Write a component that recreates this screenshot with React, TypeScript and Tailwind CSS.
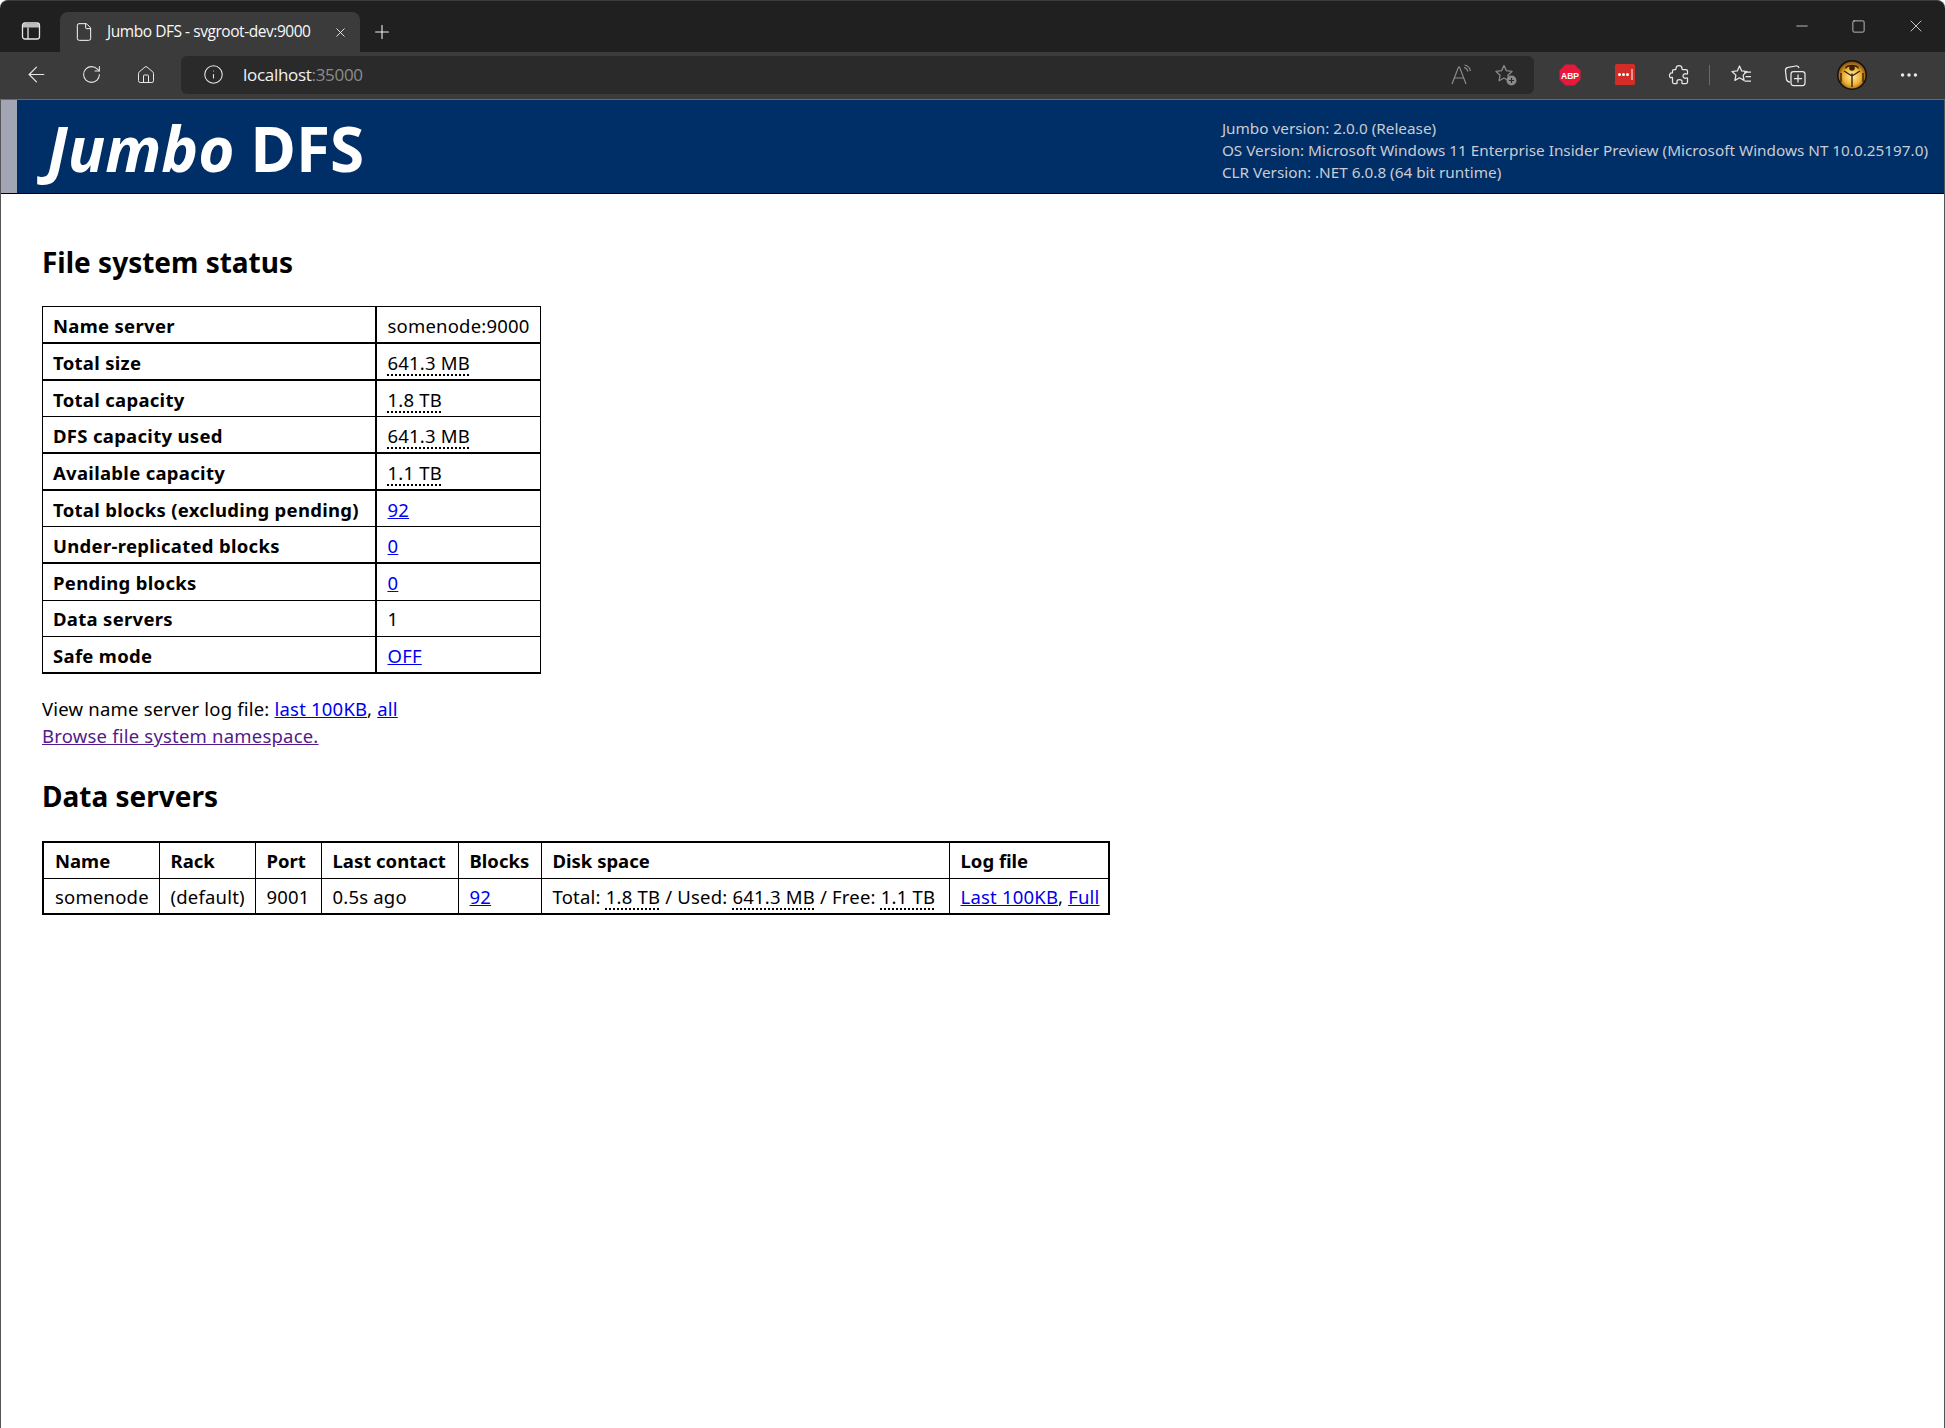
import React from "react";
import { ArrowLeft, RotateCw, House, Info, X, Plus, File, Minus, Square, Ellipsis } from "lucide-react";

const Size = ({ children }: { children: React.ReactNode }) => (
  <abbr title="bytes" className="underline decoration-dotted decoration-2 underline-offset-[5px]">
    {children}
  </abbr>
);

const Link = ({ children, visited }: { children: React.ReactNode; visited?: boolean }) => (
  <a href="#" className={visited ? "text-[#551a8b] underline" : "text-[#0000ee] underline"}>
    {children}
  </a>
);

const statusRows: { label: string; value: React.ReactNode; thin?: boolean }[] = [
  { label: "Name server", value: "somenode:9000" },
  { label: "Total size", value: <Size>641.3 MB</Size> },
  { label: "Total capacity", value: <Size>1.8 TB</Size>, thin: true },
  { label: "DFS capacity used", value: <Size>641.3 MB</Size> },
  { label: "Available capacity", value: <Size>1.1 TB</Size> },
  { label: "Total blocks (excluding pending)", value: <Link>92</Link>, thin: true },
  { label: "Under-replicated blocks", value: <Link>0</Link> },
  { label: "Pending blocks", value: <Link>0</Link>, thin: true },
  { label: "Data servers", value: "1", thin: true },
  { label: "Safe mode", value: <Link>OFF</Link> },
];

function SidebarIcon() {
  return (
    <svg width="20" height="20" viewBox="0 0 20 20" fill="none" stroke="#e8e8e8" strokeWidth="1.300" className="mb-[11px]">
      <rect x="1.500" y="2" width="17" height="16" rx="2.500" />
      <path d="M2 3h16v3.500H2z" fill="#bdbdbd" stroke="none" />
      <path d="M7 6.500V18" />
    </svg>
  );
}

function StarPlus() {
  return (
    <svg width="24" height="24" viewBox="0 0 24 24" fill="none" stroke="#8a8a8a" strokeWidth="1.300">
      <path d="M10 2.500l2.400 5.200 5.600.7-4.100 3.800 1 5.500-4.900-2.700-4.900 2.700 1-5.500L2 8.400l5.600-.7z" strokeLinejoin="round" />
      <circle cx="17.500" cy="17.500" r="5" fill="#8a8a8a" stroke="none" />
      <path d="M17.500 15v5M15 17.500h5" stroke="#2a2a2a" strokeWidth="1.200" />
    </svg>
  );
}

function ReadAloud() {
  return (
    <svg width="24" height="24" viewBox="0 0 24 24" fill="none" stroke="#8a8a8a" strokeWidth="1.200">
      <path d="M3 21L9.500 4h1L17 21M5.500 15h9.500" />
      <path d="M15 4.500c2 .5 3.500 2 4 4M15.500 2c3 .6 5.400 3 6 6" />
    </svg>
  );
}

function Abp() {
  return (
    <svg width="22" height="22" viewBox="0 0 22 22">
      <path d="M6.500 0.500h9l6 6v9l-6 6h-9l-6-6v-9z" fill="#e8173c" />
      <text x="11" y="14.500" textAnchor="middle" fontSize="8.500" fontWeight="700" fill="#fff" fontFamily="'Liberation Sans', sans-serif">
        ABP
      </text>
    </svg>
  );
}

function PasswordExt() {
  return (
    <svg width="20" height="21" viewBox="0 0 20 21">
      <rect width="20" height="21" rx="1.500" fill="#d22d27" />
      <circle cx="4.500" cy="10.500" r="1.500" fill="#fff" />
      <circle cx="8.500" cy="10.500" r="1.500" fill="#fff" />
      <circle cx="12.500" cy="10.500" r="1.500" fill="#fff" />
      <path d="M17 5v11" stroke="#fff" strokeWidth="1" />
    </svg>
  );
}

function PuzzleBlob() {
  return (
    <svg width="22" height="22" viewBox="0 0 22 22" fill="none" stroke="#e8e8e8" strokeWidth="1.250" strokeLinejoin="round">
      <path d="M8 4.500C8 2.700 9.500 1.500 11 1.500s3 1.200 3 3c0 .5 0 1 .5 1H18c1 0 1.500.6 1.500 1.500v2.500c0 .7-.7.7-1.200.5-2-.8-3.300.5-3.300 2s1.300 2.800 3.300 2c.5-.2 1.200-.2 1.200.5V18c0 1-.6 1.500-1.500 1.500h-3.500c-.7 0-.7-.6-.5-1.200.6-1.800-.8-2.800-2.500-2.800s-3 1-2.500 2.800c.2.600.2 1.200-.5 1.200H6c-1 0-1.500-.6-1.500-1.500v-4c0-.6-.5-.7-1-.6C2.500 14.500 1.500 13 1.500 11.500S2.500 8.800 3.500 9c.5.100 1 0 1-.6V7c0-1 .6-1.500 1.500-1.500h1.500c.4 0 .5-.5.500-1z" />
    </svg>
  );
}

function Favorites() {
  return (
    <svg width="22" height="22" viewBox="0 0 22 22" fill="none" stroke="#e8e8e8" strokeWidth="1.250">
      <path d="M9.500 2l2.200 4.900 5.300.6-3.900 3.600 1 5.300-4.600-2.600-4.600 2.600 1-5.300L2 7.500l5.300-.6z" strokeLinejoin="round" />
      <path d="M14 8h7M15.500 12.500h5.500M14.500 17h6.500" />
    </svg>
  );
}

function Collections() {
  return (
    <svg width="22" height="24" viewBox="0 0 22 24" fill="none" stroke="#e8e8e8" strokeWidth="1.250">
      <path d="M6 19c-2 0-3-1-3.500-2.500L1.500 8C1.300 6 2.500 4.500 4 4.300L12 3c1.500-.2 2.700.8 3 2" />
      <rect x="7" y="8.500" width="14" height="14" rx="2.500" />
      <path d="M14 11.500v8M10 15.500h8" />
    </svg>
  );
}

function Avatar() {
  return (
    <svg width="30" height="30" viewBox="0 0 30 30">
      <defs>
        <radialGradient id="glow" cx="50%" cy="55%" r="55%">
          <stop offset="0%" stopColor="#fff0b0" />
          <stop offset="60%" stopColor="#f0b030" />
          <stop offset="100%" stopColor="#7a4a10" />
        </radialGradient>
      </defs>
      <circle cx="15" cy="15" r="15" fill="#17100a" />
      <circle cx="15" cy="15" r="13.500" fill="url(#glow)" />
      <path d="M15 13.500V27M7 11l8 5 8-5M8.500 8.500C10 4.500 20 4.500 21.500 8.500M4 13v9M26 13v9" stroke="#3a2208" strokeWidth="1.400" fill="none" />
      <circle cx="15" cy="8" r="2.800" fill="#3a2208" />
    </svg>
  );
}

export default function App() {
  return (
    <div className="w-[1945px] h-[1428px] flex flex-col bg-white overflow-hidden font-['Noto_Sans',sans-serif] text-black text-[18.5px] tracking-[0.2px]">
      {/* title bar */}
      <div className="h-[52px] bg-[#202020] border-t border-[#3c3c3c] rounded-t-lg flex items-end shrink-0 pl-[21px] tracking-normal">
        <SidebarIcon />
        <div className="w-[300px] h-10 ml-[19px] bg-[#3b3b3b] rounded-t-lg flex items-center pl-[14px] pr-[12px] text-[#f8f8f8] text-[15.500px] font-['Open_Sans',sans-serif] tracking-[-0.450px]">
          <File size={20} strokeWidth={1.200} className="mr-[13px]" />
          <span className="flex-1">Jumbo DFS - svgroot-dev:9000</span>
          <X size={15} strokeWidth={1.400} />
        </div>
        <Plus size={22} strokeWidth={1.200} className="text-[#f0f0f0] ml-[11px] mb-[9px]" />
        <div className="ml-auto flex items-center gap-[40px] pr-[19px] mb-[16px] text-[#e8e8e8]">
          <Minus size={18} strokeWidth={1} />
          <Square size={15} strokeWidth={1.200} />
          <X size={20} strokeWidth={1} />
        </div>
      </div>

      {/* toolbar */}
      <div className="h-[48px] bg-[#3b3b3b] border-b border-[#6a6a6a] flex items-center shrink-0 pl-[24px] pr-[15px] pb-[2px] text-[#e8e8e8] tracking-normal">
        <ArrowLeft size={25} strokeWidth={1.100} />
        <RotateCw size={21} strokeWidth={1.200} className="ml-[32px]" />
        <House size={20} strokeWidth={1.200} className="ml-[34px]" />
        <div className="ml-[25px] w-[1353px] h-[38px] bg-[#2a2a2a] rounded-md flex items-center pl-[22px] pr-[16px]">
          <Info size={21} strokeWidth={1.200} className="mr-[19px]" />
          <span className="text-[#f2f2f2] text-[17px] font-['Open_Sans',sans-serif] tracking-[-0.3px]">
            localhost<span className="text-[#8c8c8c]">:35000</span>
          </span>
          <span className="ml-auto flex items-center gap-[21px]">
            <ReadAloud />
            <StarPlus />
          </span>
        </div>
        <span className="ml-[25px]"><Abp /></span>
        <span className="ml-[34px]"><PasswordExt /></span>
        <span className="ml-[33px]"><PuzzleBlob /></span>
        <span className="ml-[19px] w-px h-[20px] bg-[#6a6a6a]" />
        <span className="ml-[20px]"><Favorites /></span>
        <span className="ml-[32px]"><Collections /></span>
        <span className="ml-[31px]"><Avatar /></span>
        <Ellipsis size={22} strokeWidth={1.800} className="ml-[31px]" />
      </div>

      {/* page */}
      <div className="flex-1 border-x border-[#555] flex flex-col min-h-0">
        <header className="h-[94px] bg-[#002e66] border-b border-black flex shrink-0">
          <div className="w-[16px] bg-[#a1a5b4]" />
          <h1 className="ml-[30px] mt-[1px] text-white text-[62px] font-bold leading-[94px] tracking-normal whitespace-nowrap">
            <em>Jumbo</em> DFS
          </h1>
          <div className="ml-auto mr-[16px] pt-[17px] text-[#c9ccd3] text-[15.300px] leading-[22px] tracking-normal whitespace-nowrap">
            <p>Jumbo version: 2.0.0 (Release)</p>
            <p>OS Version: Microsoft Windows 11 Enterprise Insider Preview (Microsoft Windows NT 10.0.25197.0)</p>
            <p>CLR Version: .NET 6.0.8 (64 bit runtime)</p>
          </div>
        </header>

        <main className="pl-[41px]">
          <h2 className="mt-[48px] text-[28px] leading-[40px] font-bold tracking-normal">File system status</h2>
          <table className="mt-[24px] table-fixed border-collapse w-[498px]">
            <colgroup>
              <col className="w-[333px]" />
              <col className="w-[165px]" />
            </colgroup>
            <tbody>
              {statusRows.map((row) => (
                <tr key={row.label} className={row.thin ? "h-[36.700px] border border-black" : "h-[36.700px] border border-black border-b-2"}>
                  <th className="border-r-2 border-black pl-[10px] pt-[2px] text-left font-bold tracking-[0.3px] whitespace-nowrap">{row.label}</th>
                  <td className="pl-[11px] pt-[2px] whitespace-nowrap">{row.value}</td>
                </tr>
              ))}
            </tbody>
          </table>

          <p className="mt-[21px] leading-[27px]">
            View name server log file: <Link>last 100KB</Link>, <Link>all</Link>
            <br />
            <Link visited>Browse file system namespace.</Link>
          </p>

          <h2 className="mt-[27px] text-[28px] leading-[40px] font-bold tracking-normal">Data servers</h2>
          <table className="mt-[25px] table-fixed border-collapse w-[1066px] border-2 border-black">
            <colgroup>
              <col className="w-[116px]" />
              <col className="w-[96px]" />
              <col className="w-[66px]" />
              <col className="w-[137px]" />
              <col className="w-[83px]" />
              <col className="w-[408px]" />
              <col className="w-[160px]" />
            </colgroup>
            <thead>
              <tr className="h-[36px]">
                {["Name", "Rack", "Port", "Last contact", "Blocks", "Disk space", "Log file"].map((h) => (
                  <th key={h} className="border border-black pl-[11px] pt-[1px] text-left font-bold tracking-normal whitespace-nowrap">{h}</th>
                ))}
              </tr>
            </thead>
            <tbody>
              <tr className="h-[36px]">
                <td className="border border-black pl-[11px] pt-[1px]">somenode</td>
                <td className="border border-black pl-[11px] pt-[1px] whitespace-nowrap">(default)</td>
                <td className="border border-black pl-[11px] pt-[1px]">9001</td>
                <td className="border border-black pl-[11px] pt-[1px] whitespace-nowrap">0.5s ago</td>
                <td className="border border-black pl-[11px] pt-[1px]"><Link>92</Link></td>
                <td className="border border-black pl-[11px] pt-[1px] whitespace-nowrap">
                  Total: <Size>1.8 TB</Size> / Used: <Size>641.3 MB</Size> / Free: <Size>1.1 TB</Size>
                </td>
                <td className="border border-black pl-[11px] pt-[1px] whitespace-nowrap">
                  <Link>Last 100KB</Link>, <Link>Full</Link>
                </td>
              </tr>
            </tbody>
          </table>
        </main>
      </div>
    </div>
  );
}
